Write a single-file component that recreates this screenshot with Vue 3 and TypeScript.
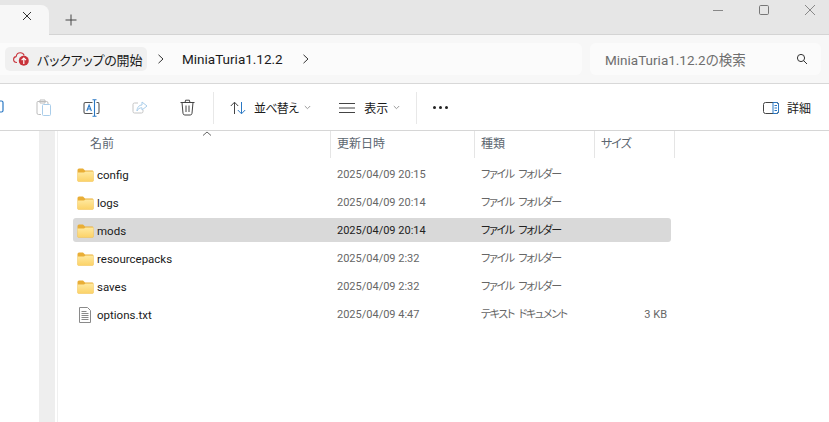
<script setup lang="ts">
interface Row {
  name: string
  date: string
  type: string
  size?: string
  file?: boolean
  selected?: boolean
}
const rows: Row[] = [
  { name: 'config', date: '2025/04/09 20:15', type: 'ファイル フォルダー' },
  { name: 'logs', date: '2025/04/09 20:14', type: 'ファイル フォルダー' },
  { name: 'mods', date: '2025/04/09 20:14', type: 'ファイル フォルダー', selected: true },
  { name: 'resourcepacks', date: '2025/04/09 2:32', type: 'ファイル フォルダー' },
  { name: 'saves', date: '2025/04/09 2:32', type: 'ファイル フォルダー' },
  { name: 'options.txt', date: '2025/04/09 4:47', type: 'テキスト ドキュメント', size: '3 KB', file: true },
]
</script>

<template>
  <div class="win">
    <header class="tabbar">
      <div class="tab">
        <svg class="ic-x" width="10" height="10" viewBox="0 0 10 10"><path d="M1 1l8 8M9 1l-8 8" stroke="#333" stroke-width="1" fill="none" /></svg>
      </div>
      <svg class="ic-plus" width="12" height="12" viewBox="0 0 12 12"><path d="M6 .5v11M.5 6h11" stroke="#444" stroke-width="1" fill="none" /></svg>
      <div class="caption">
        <svg width="12" height="12" viewBox="0 0 12 12"><path d="M1 6.500h10" stroke="#888" fill="none" /></svg>
        <svg width="12" height="12" viewBox="0 0 12 12"><rect x="1.500" y="1.500" width="9" height="9" rx="1.200" stroke="#777" fill="none" /></svg>
        <svg width="12" height="12" viewBox="0 0 12 12"><path d="M1 1l10 10M11 1L1 11" stroke="#888" fill="none" /></svg>
      </div>
    </header>

    <nav class="addr">
      <div class="crumbs">
        <div class="pill">
          <svg width="17" height="14" viewBox="0 0 17 14">
            <path d="M4 10.500C1.800 10.500.6 9.200.6 7.500c0-1.500 1-2.700 2.500-2.900C3.500 2.300 5.300.8 7.300.8c1.800 0 3.300 1 3.900 2.700" fill="none" stroke="#c8323a" stroke-width="1.100" />
            <circle cx="10.800" cy="8.700" r="5" fill="#c8323a" />
            <path d="M10.800 12V6.200M8.600 8.200l2.200-2.200 2.200 2.200" stroke="#fff" stroke-width="1.200" fill="none" />
          </svg>
          <span>バックアップの開始</span>
        </div>
        <svg class="chev" width="8" height="10" viewBox="0 0 8 10"><path d="M1.500 .8L6 5 1.500 9.200" stroke="#333" fill="none" /></svg>
        <span class="crumb">MiniaTuria1.12.2</span>
        <svg class="chev" width="8" height="10" viewBox="0 0 8 10"><path d="M1.500 .8L6 5 1.500 9.200" stroke="#333" fill="none" /></svg>
      </div>
      <div class="search">
        <span>MiniaTuria1.12.2の検索</span>
        <svg width="12" height="12" viewBox="0 0 12 12"><circle cx="5" cy="5" r="3.600" stroke="#333" fill="none" /><path d="M7.600 7.600L11 11" stroke="#333" fill="none" /></svg>
      </div>
    </nav>

    <div class="toolbar">
      <svg class="t-cut" width="6" height="18" viewBox="0 0 6 18"><path d="M-3 2h4.500q1.500 0 1.500 1.500v8q0 1.500-1.500 1.500H-3" stroke="#2a78c4" stroke-width="1.200" fill="none" /></svg>
      <svg class="t-paste" width="16" height="18" viewBox="0 0 16 18">
        <path d="M5 15.500H2.500Q1 15.500 1 14V3.500Q1 2.500 2 2.500h8.500Q12 2.500 12 4v1" stroke="#bdbdbd" fill="none" />
        <path d="M4 1h5v3H4z" stroke="#bdbdbd" fill="none" />
        <rect x="6.500" y="5.500" width="8" height="11" rx="1" stroke="#a9cdea" fill="none" />
      </svg>
      <svg class="t-rename" width="17" height="18" viewBox="0 0 17 18">
        <path d="M9.500 3.500H2.500Q1 3.500 1 5v8q0 1.500 1.500 1.500h7" stroke="#555" stroke-width="1.100" fill="none" />
        <path d="M13.500 3.500H15q1 0 1 1.500v8q0 1.500-1 1.500h-1.500" stroke="#555" stroke-width="1.100" fill="none" />
        <path d="M11.500 1v16M9.500 .8h4M9.500 17.200h4" stroke="#2a78c4" stroke-width="1.100" fill="none" />
        <path d="M3.800 12l2.300-6 2.300 6M4.600 10h3" stroke="#2a78c4" stroke-width="1.100" fill="none" />
      </svg>
      <svg class="t-share" width="16" height="14" viewBox="0 0 16 14">
        <path d="M6 2H2.500Q1 2 1 3.500v7Q1 12 2.500 12h7q1.500 0 1.500-1.500V9" stroke="#c5c5c5" fill="none" />
        <path d="M10 1l5 4-5 4V6.800C7.500 6.800 6 7.800 5 10c0-3.500 2-6 5-6z" stroke="#a9cdea" fill="none" />
      </svg>
      <svg class="t-trash" width="15" height="17" viewBox="0 0 15 17">
        <path d="M.5 3.500h14M5 3.500l.6-2.300h3.800l.6 2.300M2 3.500l1 10.800Q3.200 16 4.800 16h5.400q1.600 0 1.800-1.700l1-10.800M6 6.500v6.500M9 6.500v6.500" stroke="#444" fill="none" />
      </svg>
      <i class="sep first"></i>
      <div class="tbtn sort">
        <svg width="16" height="14" viewBox="0 0 16 14">
          <path d="M4.500 13V1.500M.8 5L4.500 1.200 8.200 5" stroke="#444" fill="none" />
          <path d="M11.500 1v11.500M7.800 9l3.700 3.800L15.200 9" stroke="#2a78c4" fill="none" />
        </svg>
        <span>並べ替え</span>
        <svg class="drop" width="7" height="5" viewBox="0 0 7 5"><path d="M.8 1L3.500 3.700 6.200 1" stroke="#999" fill="none" /></svg>
      </div>
      <div class="tbtn view">
        <svg width="16" height="12" viewBox="0 0 16 12"><path d="M0 1.500h16M0 6h16M0 10.500h16" stroke="#444" fill="none" /></svg>
        <span>表示</span>
        <svg class="drop" width="7" height="5" viewBox="0 0 7 5"><path d="M.8 1L3.500 3.700 6.200 1" stroke="#999" fill="none" /></svg>
      </div>
      <i class="sep second"></i>
      <div class="more"><b></b><b></b><b></b></div>
      <div class="details">
        <svg width="16" height="12" viewBox="0 0 16 12">
          <rect x=".5" y=".5" width="15" height="11" rx="2" stroke="#444" fill="none" />
          <path d="M10 .5h3.500q2 0 2 2v7q0 2-2 2H10z" stroke="#2a78c4" fill="none" />
          <path d="M11.500 3.500h2.500M11.500 6h2.500M11.500 8.500h2.500" stroke="#2a78c4" fill="none" />
        </svg>
        <span>詳細</span>
      </div>
    </div>

    <main class="body">
      <div class="rail"></div>
      <div class="list">
        <div class="head">
          <div class="hc name">名前<svg class="sort-up" width="10" height="5" viewBox="0 0 10 5"><path d="M1 4.500L5 1l4 3.500" stroke="#666" fill="none" /></svg></div>
          <div class="hc date">更新日時</div>
          <div class="hc type">種類</div>
          <div class="hc size">サイズ</div>
        </div>
        <div v-for="r in rows" :key="r.name" class="row" :class="{ sel: r.selected }">
          <div class="c-name">
            <svg v-if="!r.file" width="17" height="14" viewBox="0 0 17 14">
              <defs>
                <linearGradient id="fg" x1="0" y1="0" x2="0" y2="1">
                  <stop offset="0" stop-color="#ffe9a0" />
                  <stop offset="1" stop-color="#fbd267" />
                </linearGradient>
              </defs>
              <path d="M.5 2Q.5 .5 2 .5h4l2 2h7.500Q16.500 2.500 16.500 4v8.500q0 1-1 1h-14q-1 0-1-1z" fill="#e9ae36" />
              <path d="M.5 4.500H7l1.500-1h8v9q0 1-1 1h-14q-1 0-1-1z" fill="url(#fg)" />
            </svg>
            <svg v-else class="doc" width="12" height="16" viewBox="0 0 12 16">
              <path d="M.5 .5h8l3 3v12H.5z" fill="#fff" stroke="#8a8a8a" />
              <path d="M2.500 4.500h5M2.500 6.500h7M2.500 8.500h7M2.500 10.500h7M2.500 12.500h7" stroke="#8a8a8a" fill="none" />
            </svg>
            <span>{{ r.name }}</span>
          </div>
          <div class="c-date">{{ r.date }}</div>
          <div class="c-type">{{ r.type }}</div>
          <div class="c-size">{{ r.size }}</div>
        </div>
      </div>
    </main>
  </div>
</template>

<style>
html, body { margin: 0; background: #fff; }
</style>

<style scoped>
.win {
  width: 829px;
  height: 422px;
  overflow: hidden;
  display: flex;
  flex-direction: column;
  background: #fff;
  font-family: Roboto, "Noto Sans CJK JP", sans-serif;
  font-feature-settings: "palt";
  color: #1a1a1a;
}
svg { flex: none; }
.tabbar {
  height: 34px;
  flex: none;
  display: flex;
  align-items: center;
  background: #e6e6e6;
  border-bottom: 1px solid #d4d4d4;
  position: relative;
  box-sizing: content-box;
}
.tab {
  width: 49px;
  height: 30px;
  align-self: flex-end;
  margin-bottom: -1px;
  background: #f7f7f7;
  border-top-right-radius: 8px;
  display: flex;
  align-items: center;
  justify-content: flex-end;
  padding: 0 17px 8px 0;
  box-sizing: border-box;
}
.ic-plus { margin: 5px 0 0 16px; }
.caption {
  margin-left: auto;
  align-self: flex-start;
  display: flex;
  gap: 34px;
  padding: 4px 13px 0 0;
}
.addr {
  height: 49px;
  flex: none;
  display: flex;
  gap: 8px;
  align-items: center;
  padding: 0 8px 0 0;
  background: #f7f7f7;
  border-bottom: 1px solid #d8d8d8;
  box-sizing: border-box;
}
.crumbs {
  flex: 1;
  height: 32px;
  display: flex;
  align-items: center;
  background: #fbfbfb;
  border-radius: 0 6px 6px 0;
  padding-left: 5px;
  font-size: 13.500px;
}
.pill {
  height: 24px;
  width: 142px;
  box-sizing: border-box;
  padding-left: 8px;
  display: flex;
  align-items: center;
  gap: 7px;
  background: #f0f0f0;
  border-radius: 5px;
  font-size: 13px;
  letter-spacing: -.2px;
  white-space: nowrap;
}
.chev { margin-left: 10px; }
.crumb { margin-left: 17px; margin-right: 19px; }
.crumb + .chev { margin-left: 0; }
.search {
  width: 231px;
  height: 32px;
  display: flex;
  align-items: center;
  justify-content: space-between;
  padding: 0 13px 0 15px;
  box-sizing: border-box;
  background: #fbfbfb;
  border-radius: 6px;
  font-size: 13.500px;
  color: #6e6e6e;
}
.toolbar {
  height: 47px;
  flex: none;
  display: flex;
  align-items: center;
  padding-top: 1px;
  border-bottom: 1px solid #d6d6d6;
  font-size: 12px;
  box-sizing: border-box;
}
.t-cut { margin-right: 30px; }
.t-paste { margin-right: 31px; }
.t-rename { margin-right: 32px; }
.t-share { margin-right: 32px; }
.t-trash { margin-right: 18px; }
.sep { width: 1px; height: 32px; background: #e8e8e8; flex: none; }
.tbtn { display: flex; align-items: center; }
.sort { margin-left: 16px; }
.sort span { margin-left: 8px; letter-spacing: -.7px; }
.sort .drop { margin-left: 6px; }
.view { margin-left: 28px; }
.view span { margin-left: 9px; }
.view .drop { margin-left: 5px; }
.second { margin-left: 16px; }
.more { display: flex; gap: 3px; margin-left: 16px; }
.more b { width: 3px; height: 3px; border-radius: 50%; background: #222; }
.details {
  margin-left: auto;
  margin-right: 18px;
  display: flex;
  align-items: center;
  gap: 8px;
}
.body { flex: 1; display: flex; min-height: 0; }
.rail {
  width: 16px;
  margin-left: 39px;
  background: #eeeeee;
  flex: none;
}
.list {
  flex: 1;
  margin-left: 2px;
  border-left: 1px solid #f0f0f0;
  padding-left: 15px;
  font-size: 11.500px;
}
.head {
  height: 26px;
  display: grid;
  grid-template-columns: 258px 144px 120px 80px;
  font-size: 12px;
  color: #5c6670;
}
.hc {
  border-right: 1px solid #e5e5e5;
  padding-left: 6px;
  line-height: 27px;
  position: relative;
  white-space: nowrap;
}
.hc.name { padding-left: 17px; }
.hc.size { letter-spacing: -1px; }
.sort-up { position: absolute; left: 129px; top: 0; }
.row {
  height: 24px;
  width: 598px;
  margin-top: 4px;
  display: grid;
  grid-template-columns: 258px 144px 120px 76px;
  align-items: center;
  border-radius: 3px;
  box-sizing: border-box;
  white-space: nowrap;
  line-height: 26px;
}
.head + .row { margin-top: 5px; }
.sel { background: #d9d9d9; }
.c-name { display: flex; align-items: center; gap: 4px; padding-left: 4px; }
.c-name > svg:not(.doc) { margin-right: -1px; }
.doc { margin: 0 2px 0 2px; }
.c-date { padding-left: 6px; color: #666; font-size: 11px; }
.c-type { padding-left: 6px; color: #666; font-size: 11px; letter-spacing: -1.300px; word-spacing: 3px; }
.sel .c-date, .sel .c-type { color: #222; }
.c-size { text-align: right; padding-right: 4px; color: #666; font-size: 11px; }
</style>
